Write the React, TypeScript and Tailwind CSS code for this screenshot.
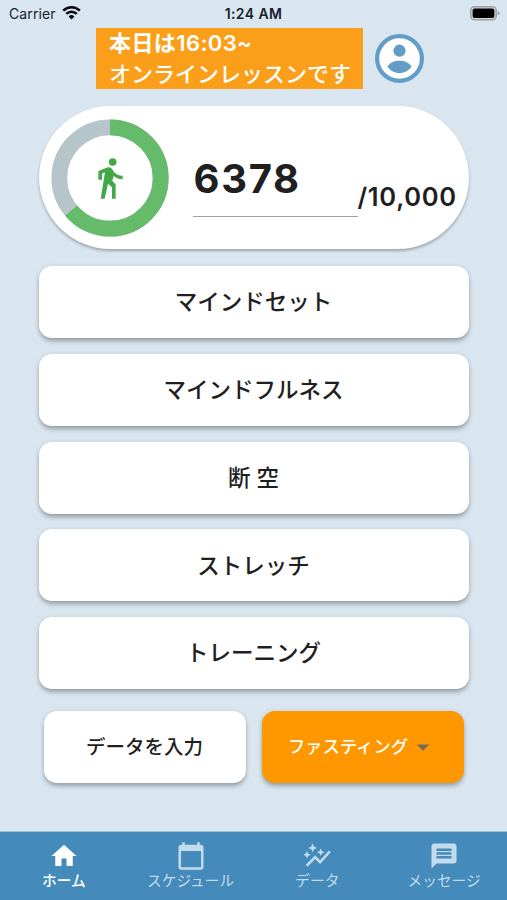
import type { ReactNode } from 'react';
import { MdArrowDropDown, MdAutoGraph, MdCalendarToday, MdHome, MdMessage } from 'react-icons/md';

const steps = 6378;
const goal = 10000;

const menus = ['マインドセット', 'マインドフルネス', '断 空', 'ストレッチ', 'トレーニング'];

const tabs = [
    { label: 'ホーム', icon: MdHome, active: true },
    { label: 'スケジュール', icon: MdCalendarToday, active: false },
    { label: 'データ', icon: MdAutoGraph, active: false },
    { label: 'メッセージ', icon: MdMessage, active: false },
];

function StatusBar() {
    return (
        <div className="grid h-7 grid-cols-3 items-center pr-[6px] pl-[9px] text-[14px] text-[#17212b]">
            <div className="-mt-px flex items-center gap-[6px]">
                <span className="tracking-[0.1px]">Carrier</span>
                <svg className="-mt-[2px]" width="19" height="15" viewBox="0 0 19 15" fill="none" stroke="#05090d" strokeWidth="2.6">
                    <path d="M1.2 5.6a11.8 11.8 0 0 1 16.6 0" />
                    <path d="M4.3 8.9a7.4 7.4 0 0 1 10.4 0" />
                    <path d="M9.5 14.4l-2.9-3a4.2 4.2 0 0 1 5.8 0z" fill="#05090d" stroke="none" />
                </svg>
            </div>
            <span className="-mt-px -ml-[3px] text-center font-semibold tracking-[0.4px]">1:24 AM</span>
            <svg className="-mt-[2px] justify-self-end" width="31" height="15" viewBox="0 0 31 15">
                <rect x="0.8" y="0.8" width="25.4" height="12.9" rx="3.6" fill="#d3d9dc" stroke="#9ba2a6" strokeWidth="1.5" />
                <rect x="2.6" y="2.6" width="21.8" height="9.3" rx="2" fill="#000" />
                <path d="M27.6 5v4.6q2-.8 2-2.3t-2-2.3z" fill="#9ba2a6" />
            </svg>
        </div>
    );
}

function StepRing() {
    const r = 50.7;
    const length = 2 * Math.PI * r;

    return (
        <div className="grid size-[118px] shrink-0 place-items-center">
            <svg className="col-start-1 row-start-1 -rotate-90" width="118" height="118" viewBox="0 0 118 118" fill="none" strokeWidth="15.8">
                <circle cx="59" cy="59" r={r} stroke="#b6c5ca" />
                <circle cx="59" cy="59" r={r} stroke="#66bb6a" strokeDasharray={`${(length * steps) / goal} ${length}`} />
            </svg>
            <svg className="col-start-1 row-start-1 mt-[2px] ml-px" width="27" height="41" viewBox="0 0 81 123" fill="#43a948">
                <circle cx="47" cy="12" r="11.5" />
                <path d="M4 65V39l25-10c7-3 13-1 17 5l5 8c6 7 15 11 26 11v11c-11 0-20-4-27-10l-4 15 10 10v43H45V88L33 77l-10 45H11l13-79-9 4v18z" />
            </svg>
        </div>
    );
}

function CardButton({ className, children }: { className: string; children: ReactNode }) {
    return (
        <button className={`flex h-[72px] items-center justify-center rounded-[13px] shadow-[0_4px_5px_-1px_rgba(0,0,0,0.25),0_1px_5px_rgba(0,0,0,0.14)] ${className}`}>
            {children}
        </button>
    );
}

export default function App() {
    return (
        <div className="flex h-[900px] w-[507px] flex-col overflow-hidden bg-[#d9e6ef] font-['Inter','Noto_Sans_CJK_JP',sans-serif] text-[#1f1f1f]">
            <StatusBar />

            <header className="flex h-[61px] items-center gap-3 pl-24">
                <div className="h-[61px] w-[267px] bg-[#fb9f1a] pl-[13px] text-[22px] leading-[31px] font-semibold whitespace-nowrap text-white">
                    <p className="tracking-[0.4px]">本日は16:03~</p>
                    <p className="font-medium">オンラインレッスンです</p>
                </div>
                <svg width="49" height="49" viewBox="0 0 49 49" fill="#619dc7">
                    <circle cx="24.5" cy="24.5" r="22.4" fill="#fff" stroke="#619dc7" strokeWidth="4.2" />
                    <circle cx="24.5" cy="16.7" r="6.1" />
                    <path d="M12.4 32.5c2.4-3.7 7-5.7 12.1-5.7s9.7 2 12.1 5.7c-2.4 3.7-7 6.6-12.1 6.6s-9.7-2.9-12.1-6.6z" />
                </svg>
            </header>

            <main className="flex flex-1 flex-col px-[38.5px] pt-[17px]">
                <section className="flex h-[143px] shrink-0 items-center rounded-full bg-white pl-3 shadow-[0_2px_3px_rgba(0,0,0,0.28)]">
                    <StepRing />
                    <div className="mt-[39px] ml-6 h-[72px] w-[165px] self-start border-b border-[#a3a3a3] pl-px text-[40px] leading-[68px] font-bold tracking-[1.7px]">{steps}</div>
                    <span className="mt-[38px] text-[25.5px] leading-[38px] font-semibold tracking-[0.7px]">/10,000</span>
                </section>

                <div className="mt-[17px] flex flex-col gap-[15.8px]">
                    {menus.map((menu) => (
                        <CardButton key={menu} className="bg-white text-[22.5px] font-medium">
                            {menu}
                        </CardButton>
                    ))}
                </div>

                <div className="mt-[22px] grid grid-cols-2 gap-4 px-[5px]">
                    <CardButton className="bg-white text-[19.5px] font-medium">データを入力</CardButton>
                    <CardButton className="bg-[#ff9800] pl-px text-[17.3px] font-medium text-white">
                        ファスティング
                        <MdArrowDropDown className="size-[30px] text-[#756a58]" />
                    </CardButton>
                </div>
            </main>

            <nav className="grid h-[69px] grid-cols-4 border-t border-[#9fc3dc] bg-[#448aba]">
                {tabs.map((tab) => (
                    <div key={tab.label} className={`flex flex-col items-center pt-[9px] pl-px ${tab.active ? 'font-medium text-white' : 'text-[#c3dcec]'}`}>
                        <tab.icon className="size-[30px] shrink-0" />
                        <span className="text-[14.7px] leading-[21px] whitespace-nowrap">{tab.label}</span>
                    </div>
                ))}
            </nav>
        </div>
    );
}
